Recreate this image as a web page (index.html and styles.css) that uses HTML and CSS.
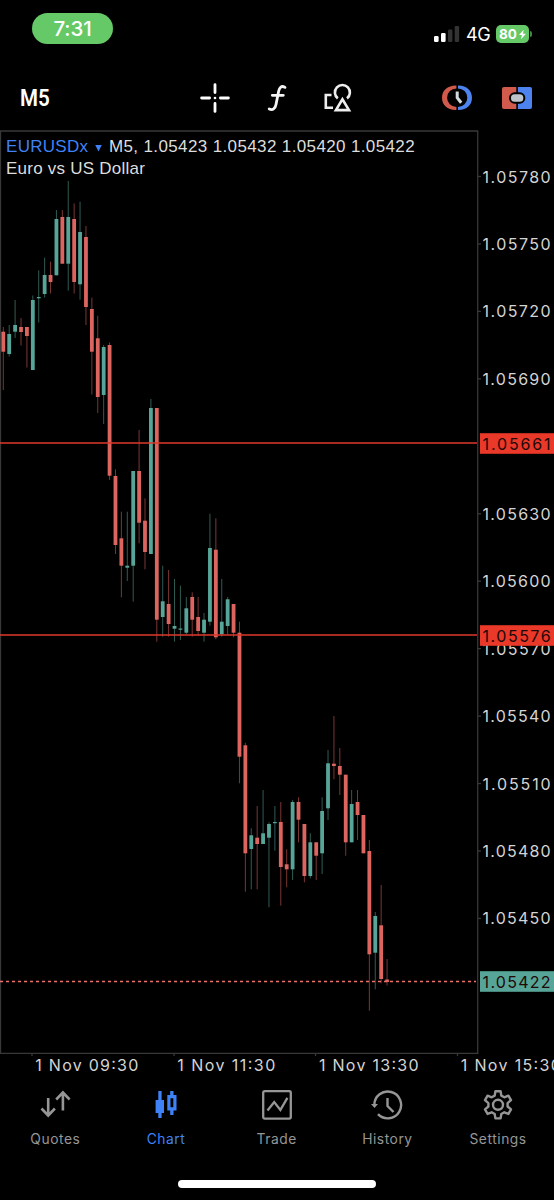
FILE: index.html
```
<!DOCTYPE html>
<html lang="en">
<head>
  <meta charset="UTF-8">
  <title>EURUSDx M5</title>
  <link rel="stylesheet" href="styles.css">
</head>
<body>
  <header class="status">
    <div class="time">7:31</div>
    <div class="status-right">
      <svg width="26" height="16" viewBox="0 0 26 16">
        <rect x="0" y="10" width="4.6" height="6" rx="1.2" fill="#fff"/>
        <rect x="7" y="7" width="4.6" height="9" rx="1.2" fill="#fff"/>
        <rect x="14" y="3.5" width="4.4" height="12.5" rx="1.2" fill="#333"/>
        <rect x="20.7" y="0" width="4.4" height="16" rx="1.2" fill="#333"/>
      </svg>
      <span class="network">4G</span>
      <div class="battery">80<svg width="7" height="11" viewBox="0 0 8 11"><path d="M5.3 0 0 6h3.3L2.3 11 8 4.6H4.6z" fill="#fff"/></svg></div>
      <i class="battery-tip"></i>
    </div>
  </header>

  <nav class="toolbar">
    <div class="period"><span>M5</span></div>
    <div class="tools">
      <svg width="30" height="30" viewBox="0 0 30 30" stroke="#fff" stroke-width="2.8" stroke-linecap="round">
        <path d="M15 1.6v8M15 20.4v8M1.6 15h8M20.4 15h8"/>
        <path d="M15 15h.01" stroke-width="2.6"/>
      </svg>
      <svg class="fx" width="20" height="28" viewBox="0 0 20 28" fill="none" stroke="#f4f4f4" stroke-width="2.8" stroke-linecap="round">
        <path d="M18 3.4C14.4 1.2 12.4 3.4 11.7 7L9 20.5C8.3 24.8 5.6 26.6 2.2 24.9M5.3 11.3h11"/>
      </svg>
      <svg width="28" height="29" viewBox="0 0 28 29" fill="none" stroke="#eee" stroke-width="2.6">
        <path d="M7.500 12H1.800V24.700H9"/>
        <path d="M13.800 15.400A7.500 7.500 0 1 1 23 15.400"/>
        <path d="M18.400 16.300 25 27.100H11.900z"/>
      </svg>
    </div>
    <div class="trade-tools">
      <svg width="30" height="26" viewBox="0 0 30 26">
        <path d="M14.400 .5C5.500 .3 0 5.500 0 12.800s5.500 12.500 14.400 12.200v-3a9.300 9.300 0 0 1 0-18.600z" fill="#d05a4c"/>
        <path d="M16 .5c8.500-.2 14 5 14 12.300S24.500 25.300 16 25v-3a9.300 9.300 0 0 0 0-18.600z" fill="#4c83ee"/>
        <path d="M15.200 6.500v6.300l4 5" fill="none" stroke="#d5dade" stroke-width="3"/>
      </svg>
      <svg width="30" height="22" viewBox="0 0 30 22">
        <path d="M2 0h12.300v22H2a2 2 0 0 1-2-2V2a2 2 0 0 1 2-2z" fill="#d05a4c"/>
        <path d="M15.900 0H28a2 2 0 0 1 2 2v18a2 2 0 0 1-2 2H15.900z" fill="#4c83ee"/>
        <rect x="8" y="6.300" width="14.300" height="9.400" rx="4.500" fill="#bdc5ca" stroke="#000" stroke-width="2"/>
      </svg>
    </div>
  </nav>

  <main class="chart">
    <div class="info">
      <div><span class="symbol">EURUSDx</span><span class="arrow"></span><span class="quote">M5, 1.05423 1.05432 1.05420 1.05422</span></div>
      <div class="name">Euro vs US Dollar</div>
    </div>
    <svg id="plot" width="554" height="946" viewBox="0 130 554 946">
      <path class="frame" d="M.5 1053V131H477.700V1053M0 1053.300H478.500"/>
      <g id="scale"></g>
      <g id="candles"></g>
      <path class="level" d="M0 442.900H477M0 635.100H477"/>
      <path class="bid" d="M0 981.500H476"/>
      <g id="tags"></g>
    </svg>
  </main>

  <nav class="tabs">
    <a class="tab">
      <svg width="32" height="32" viewBox="0 0 32 32" fill="none" stroke="currentColor" stroke-width="2.600">
        <path d="M9.200 9v17.500M2.500 19.500l6.700 7 6.700-7M23.900 21.500V3.500M17.200 10.500l6.700-7 6.700 7"/>
      </svg>
      Quotes
    </a>
    <a class="tab active">
      <svg width="32" height="32" viewBox="0 0 32 32">
        <path d="M8.300 2h3.300v9H14v13h-2.400v5H8.300v-5H5.600V11h2.700z" fill="currentColor"/>
        <path d="M20.200 2h3.300v4h3v15.500h-3V26h-3.300v-4.500h-2.900V6h2.900zM20.500 9.200v9.100h2.800V9.200z" fill="currentColor" fill-rule="evenodd"/>
      </svg>
      Chart
    </a>
    <a class="tab">
      <svg width="32" height="32" viewBox="0 0 32 32" fill="none" stroke="currentColor" stroke-width="2.300">
        <rect x="2.200" y="2.200" width="27.600" height="27.400" rx="1.500"/>
        <path d="M6.500 21.500l6.700-8.400 6.200 7.800 7-12"/>
      </svg>
      Trade
    </a>
    <a class="tab">
      <svg width="32" height="32" viewBox="1 0 32 32" fill="none" stroke="currentColor" stroke-width="2.400">
        <path d="M4.300 16A13.400 13.400 0 1 1 8 25.200"/>
        <path d="M1 15h7l-3.500 4z" fill="currentColor" stroke="none"/>
        <path d="M17.500 9v8l6 6"/>
      </svg>
      History
    </a>
    <a class="tab">
      <svg width="32" height="32" viewBox="0 0 32 32" fill="none" stroke="currentColor" stroke-width="2.400" stroke-linejoin="round">
        <path d="M13.400 2.200h5.200l.7 4.400 3 1.700 4.100-1.600 2.600 4.500-3.400 2.900v3.400l3.400 2.900-2.600 4.500-4.100-1.600-3 1.700-.7 4.400h-5.200l-.7-4.400-3-1.700-4.100 1.600L3 20.400l3.400-2.900v-3.400L3 11.200l2.600-4.500 4.100 1.600 3-1.700z"/>
        <circle cx="16" cy="15.800" r="5"/>
      </svg>
      Settings
    </a>
  </nav>
  <div class="home-bar"></div>

  <script src="chart.js"></script>
</body>
</html>
```

FILE: styles.css
```
* { box-sizing: border-box; }
body { margin: 0; width: 554px; height: 1200px; overflow: hidden; background: #000; color: #fff; font-family: Inter, "Liberation Sans", sans-serif; }

.status { display: flex; justify-content: space-between; height: 65px; padding: 13px 22px 0 32px; }
.time { width: 81px; height: 31px; border-radius: 16px; background: #65c968; font-size: 20.5px; font-weight: 500; line-height: 31px; text-align: center; letter-spacing: -0.1px; }
.status-right { display: flex; align-items: center; height: 42px; }
.network { width: 24px; margin-left: 6px; font-size: 18px; white-space: nowrap; letter-spacing: -0.5px; }
.battery { display: flex; align-items: center; justify-content: center; gap: 2px; width: 33px; height: 18px; margin-left: 6px; border-radius: 5px; background: #65c968; font-size: 13.5px; font-weight: 700; }
.battery-tip { width: 2px; height: 6px; margin-left: 1px; border-radius: 0 2px 2px 0; background: #458847; }

.toolbar { display: flex; align-items: center; height: 65px; padding: 0 22px 0 20px; }
.period { width: 180px; font-family: Roboto, sans-serif; font-size: 24.5px; font-weight: 600; }
.period span { display: inline-block; transform: scaleX(.84); transform-origin: 0 50%; }
.tools { display: flex; align-items: center; width: 242px; }
.fx { margin: 0 37px; }
.trade-tools { display: flex; align-items: center; gap: 30px; }

.chart { position: relative; height: 946px; }
.chart svg { display: block; }
.info { position: absolute; top: 6px; left: 6px; font-family: "Liberation Sans", sans-serif; font-size: 17px; line-height: 22px; color: #ddd; white-space: nowrap; }
.info > div { display: flex; align-items: center; height: 22px; }
.symbol { width: 83px; color: #3f82f7; letter-spacing: .3px; }
.arrow { width: 7px; height: 7px; margin: 2px 7px 0 6px; background: #3f82f7; clip-path: polygon(0 0, 100% 0, 50% 100%); }
.quote { letter-spacing: .37px; }
.name { letter-spacing: .24px; }

.frame, .tick { fill: none; stroke: #383838; stroke-width: 1.3; }
.up { fill: #57a598; stroke: #57a598; }
.down { fill: #dc6560; stroke: #dc6560; }
.wick { stroke-width: 1; stroke-opacity: .55; }
.body { stroke: none; }
.level { stroke: #dd382b; stroke-width: 1.5; }
.bid { stroke: #ec7068; stroke-width: 1.3; stroke-dasharray: 3 3; }
.label { fill: #d4d4d4; font-size: 16px; }
.tag-red { fill: #ea3829; }
.tag-green { fill: #57a598; }
.tag-text { fill: #200807; font-size: 16px; }

.tabs { display: flex; height: 89px; padding-top: 13px; }
.tab { display: flex; flex-direction: column; align-items: center; width: 110.7px; color: #969696; font-size: 13.8px; line-height: 18px; letter-spacing: .55px; gap: 9px; }
.active { color: #3f82f7; }
.home-bar { width: 198px; height: 8px; margin: 15px 0 0 178px; border-radius: 4px; background: #fff; }
```

FILE: chart.js
```
// [direction, high, body top, body bottom, low]
const candles = [
  ["down", 327, 331.7, 351.7, 390],
  ["up", 325, 334, 354, 356.5],
  ["up", 300, 325, 331.7, 338],
  ["down", 318, 327, 332, 345.5],
  ["down", 327, 327, 336, 367.5],
  ["up", 295.5, 300, 370, 370],
  ["up", 270.3, 297, 298.3, 322.5],
  ["up", 257.7, 275, 294, 297.5],
  ["down", 261.7, 275, 282, 293.5],
  ["up", 210, 219, 275.3, 275.3],
  ["down", 210, 217, 263.7, 263.7],
  ["up", 181, 217, 263.7, 290.7],
  ["down", 203.5, 219, 282, 293.5],
  ["up", 201.7, 232, 284.3, 299.7],
  ["down", 226, 237, 307, 325],
  ["down", 297.7, 309, 351.7, 394.5],
  ["down", 315.7, 338.3, 397, 413],
  ["up", 345, 347, 395, 424],
  ["down", 342.5, 345, 475.7, 480],
  ["down", 469.3, 476, 545, 554],
  ["down", 511.7, 538.3, 565.7, 597.3],
  ["up", 511.7, 565.7, 567.7, 581],
  ["up", 471, 471, 565.7, 601.7],
  ["down", 430, 471, 522.7, 543.3],
  ["down", 498.3, 520.7, 552, 569.3],
  ["up", 399, 408, 554, 554],
  ["down", 408, 408, 619.7, 641.7],
  ["up", 565.7, 601.3, 617, 636.7],
  ["down", 570, 604, 624, 636.7],
  ["up", 579, 626, 628.7, 641.7],
  ["up", 585.7, 628.5, 629.7, 640],
  ["up", 597, 608.3, 632.7, 634.3],
  ["down", 592.3, 597, 619.7, 636.7],
  ["down", 597, 617, 631, 635.7],
  ["up", 613, 619.7, 632.7, 641.7],
  ["up", 513.7, 548, 621.7, 625.7],
  ["down", 518.3, 549.7, 637.3, 639.3],
  ["up", 579, 621.7, 634.3, 636.7],
  ["up", 597, 599.3, 626, 634.3],
  ["down", 604, 604, 632.7, 637.3],
  ["down", 621.7, 632.7, 756.7, 783.3],
  ["down", 742.7, 745.3, 853.3, 891.7],
  ["up", 828.3, 835.3, 849, 889.3],
  ["down", 806, 837.7, 844, 889.3],
  ["up", 790, 833.3, 844, 844],
  ["up", 822.3, 824, 837.7, 907.3],
  ["up", 806, 822, 823.2, 850.7],
  ["down", 802, 822, 867, 905.7],
  ["down", 849.3, 864.3, 869.3, 887.3],
  ["up", 800, 802, 869.3, 880],
  ["down", 797.3, 802, 819.7, 842.3],
  ["down", 824, 824, 876, 882.3],
  ["up", 833.3, 842.3, 876, 878.3],
  ["down", 842.3, 842.3, 855.7, 880],
  ["up", 797.3, 811, 853.3, 874],
  ["up", 750, 763.3, 808.3, 820],
  ["down", 716, 763.7, 766, 779.3],
  ["down", 748, 766, 774.7, 795],
  ["down", 774.7, 774.7, 842.3, 855.7],
  ["up", 790, 804, 842.3, 842.3],
  ["down", 790, 802, 815, 840],
  ["down", 815, 815, 853.3, 853.3],
  ["down", 840, 851, 954.3, 1010.7],
  ["up", 912, 916, 952.7, 989.3],
  ["down", 885, 925.3, 979, 983.3],
  ["down", 959, 979.5, 982, 985.7]
];

let out = "";
candles.forEach(([dir, high, top, bottom, low], i) => {
  const x = 3.3 + i * 5.904;
  out += `<path class="${dir} wick" d="M${x} ${high}V${low}"/>`;
  out += `<rect class="${dir} body" x="${x - 1.9}" y="${top}" width="3.8" height="${bottom - top}"/>`;
});
document.getElementById("candles").innerHTML = out;

// price scale, 30 points per step
let scale = "";
for (let i = 0; i < 12; i++) {
  if (i === 4) continue; // covered by the 1.05661 tag
  const y = 176.5 + i * 67.45;
  const price = (1.0578 - i * 0.0003).toFixed(5);
  scale += `<path class="tick" d="M478 ${y}h3"/>`;
  scale += `<text class="label" x="482.6" y="${y + 6}" textLength="68">${price}</text>`;
}

// time scale: tick x, label x, label width
[
  [32, 35.3, 103, "1 Nov 09:30"],
  [174, 177.3, 98, "1 Nov 11:30"],
  [315.5, 319, 99.5, "1 Nov 13:30"],
  [457.5, 460.8, 100, "1 Nov 15:30"]
].forEach(([tick, x, width, text]) => {
  scale += `<path class="tick" d="M${tick} 1053v3"/>`;
  scale += `<text class="label" x="${x}" y="1071" textLength="${width}">${text}</text>`;
});
document.getElementById("scale").innerHTML = scale;

document.getElementById("tags").innerHTML = [
  [443.5, "1.05661", "tag-red"],
  [635.5, "1.05576", "tag-red"],
  [981.5, "1.05422", "tag-green"]
].map(([y, text, cls]) =>
  `<rect class="${cls}" x="480" y="${y - 10.3}" width="74" height="20.6"/>
   <text class="tag-text" x="482.6" y="${y + 6}" textLength="68">${text}</text>`
).join("");
```
